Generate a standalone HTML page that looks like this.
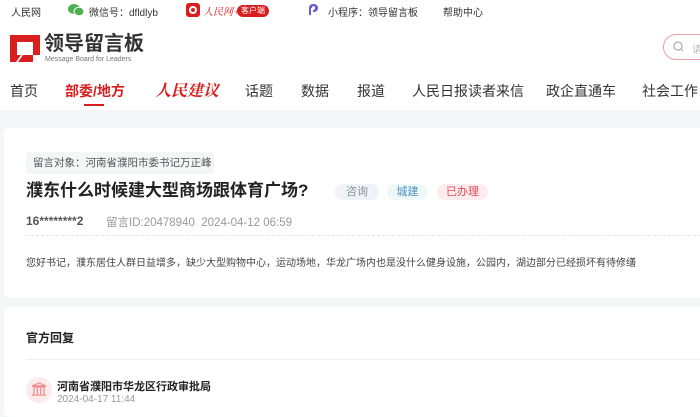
<!DOCTYPE html>
<html><head><meta charset="utf-8"><style>
*{margin:0;padding:0;box-sizing:border-box}
body{width:700px;height:408px;overflow:hidden;background:#f5f6f8;font-family:"Liberation Sans","Noto Sans CJK SC",sans-serif;color:#333;position:relative}
.abs{position:absolute;white-space:nowrap}
.top{position:absolute;left:0;top:0;width:700px;height:110px;background:#fff}
.card{position:absolute;left:4px;width:700px;background:#fff;border-radius:6px}
.tag{position:absolute;top:184px;height:16px;border-radius:8px;font-size:11px;line-height:16px;text-align:center}
</style></head><body>
<div class="top"></div>
<div class="abs" style="left:11px;top:4px;font-size:10px;color:#333">人民网</div>
<svg class="abs" style="left:68px;top:4px" width="16" height="12" viewBox="0 0 16 12"><ellipse cx="6" cy="5" rx="6" ry="5" fill="#4caf50"/><ellipse cx="11" cy="7.5" rx="5" ry="4.2" fill="#4caf50" stroke="#fff" stroke-width="1"/></svg>
<div class="abs" style="left:89px;top:4px;font-size:10px;color:#333">微信号：dfldlyb</div>
<div class="abs" style="left:186px;top:3px;width:14px;height:14px;background:#d81e1e;border-radius:3px"><div style="margin:3px;width:8px;height:8px;border:2px solid #fff;border-radius:50%"></div></div>
<div class="abs" style="left:203px;top:3px;font-size:10px;color:#d81e1e;font-style:italic;font-family:'Noto Serif CJK SC',serif">人民网+</div>
<div class="abs" style="left:237px;top:5px;width:32px;height:12px;background:#d81e1e;border-radius:6px;color:#fff;font-size:8px;line-height:12px;text-align:center">客户端</div>
<svg class="abs" style="left:307px;top:3px" width="13" height="13" viewBox="0 0 13 13"><path d="M3 12V5a3 3 0 1 1 3 3 M6 8h1a3 3 0 1 0-3-3" fill="none" stroke="#6b5cd6" stroke-width="2"/></svg>
<div class="abs" style="left:328px;top:4px;font-size:10px;color:#333">小程序：领导留言板</div>
<div class="abs" style="left:443px;top:4px;font-size:10px;color:#333">帮助中心</div>
<svg class="abs" style="left:10px;top:35px" width="30" height="27" viewBox="0 0 30 27"><path d="M0 0h30v20H23V7H7v13h4l-5 7H0z" fill="#d81e1e"/><path d="M13 20h10v7H8z" fill="#d81e1e"/></svg>
<div class="abs" style="left:44px;top:32px;font-size:20px;font-weight:bold;color:#333;line-height:25px">领导留言板</div>
<div class="abs" style="left:45px;top:56px;font-size:7px;color:#777">Message Board for Leaders</div>
<div class="abs" style="left:663px;top:34px;width:60px;height:26px;border:1.5px solid #f0a0a6;border-radius:13px"></div>
<svg class="abs" style="left:673px;top:41px" width="11" height="11" viewBox="0 0 11 11"><circle cx="5" cy="5" r="4" fill="none" stroke="#aaa" stroke-width="1.2"/><path d="M8 8l2 2" stroke="#aaa"/></svg>
<div class="abs" style="left:692px;top:41px;font-size:10px;color:#bbb">请</div>
<div class="abs" style="left:10px;top:81px;font-size:14px;color:#333">首页</div>
<div class="abs" style="left:65px;top:81px;font-size:14px;color:#d81e1e;font-weight:bold">部委/地方</div>
<div class="abs" style="left:84px;top:104px;width:20px;height:2px;background:#d81e1e"></div>
<div class="abs" style="left:155px;top:78px;font-size:16px;color:#d81e1e;font-weight:bold;font-style:italic;font-family:'Noto Serif CJK SC',serif">人民建议</div>
<div class="abs" style="left:245px;top:81px;font-size:14px">话题</div>
<div class="abs" style="left:301px;top:81px;font-size:14px">数据</div>
<div class="abs" style="left:357px;top:81px;font-size:14px">报道</div>
<div class="abs" style="left:412px;top:81px;font-size:14px">人民日报读者来信</div>
<div class="abs" style="left:546px;top:81px;font-size:14px">政企直通车</div>
<div class="abs" style="left:642px;top:81px;font-size:14px">社会工作</div>
<div class="card" style="top:128px;height:170px"></div>
<div class="abs" style="left:26px;top:152px;width:188px;height:22px;background:#f4f5f7;border-radius:2px;font-size:10.5px;line-height:22px;padding-left:7px;color:#555">留言对象：河南省濮阳市委书记万正峰</div>
<div class="abs" style="left:26px;top:180px;font-size:17px;font-weight:bold;color:#222;line-height:22px">濮东什么时候建大型商场跟体育广场?</div>
<div class="tag abs" style="left:335px;width:44px;background:#f0f2f5;color:#8a94a6">咨询</div>
<div class="tag abs" style="left:387px;width:41px;background:#eef8f8;color:#4a90c2">城建</div>
<div class="tag abs" style="left:437px;width:51px;background:#fdecee;color:#e04a5a">已办理</div>
<div class="abs" style="left:26px;top:214px;font-size:12px;font-weight:bold;color:#555">16********2</div>
<div class="abs" style="left:106px;top:214px;font-size:11.5px;color:#999">留言ID:20478940 &nbsp;2024-04-12 06:59</div>
<div class="abs" style="left:26px;top:235px;width:680px;border-top:1px dashed #e6e6e6"></div>
<div class="abs" style="left:26px;top:254px;font-size:10px;color:#444">您好书记，濮东居住人群日益增多，缺少大型购物中心，运动场地，华龙广场内也是没什么健身设施，公园内，湖边部分已经损坏有待修缮</div>
<div class="card" style="top:307px;height:110px"></div>
<div class="abs" style="left:26px;top:329px;font-size:12px;font-weight:bold;color:#222">官方回复</div>
<div class="abs" style="left:26px;top:359px;width:680px;height:1px;background:#eee"></div>
<div class="abs" style="left:26px;top:377px;width:26px;height:26px;border-radius:50%;background:#fdeaea"></div>
<svg class="abs" style="left:31px;top:382px" width="16" height="15" viewBox="0 0 16 15"><path d="M8 1L1 4h14z M2 5h12 M3 6v6 M6.3 6v6 M9.7 6v6 M13 6v6 M1 13h14" fill="none" stroke="#e88" stroke-width="1.2"/></svg>
<div class="abs" style="left:57px;top:378px;font-size:11px;font-weight:bold;color:#222">河南省濮阳市华龙区行政审批局</div>
<div class="abs" style="left:57px;top:394px;font-size:10px;color:#999">2024-04-17 11:44</div>
</body></html>
